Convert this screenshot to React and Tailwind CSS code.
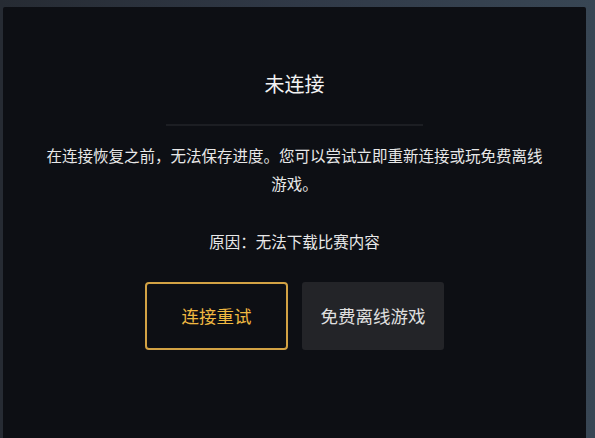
import React from "react";

export default function App() {
  const font = { fontFamily: '"Noto Sans CJK SC", "Noto Sans", sans-serif' };
  return (
    <div
      className="w-[595px] h-[438px] overflow-hidden bg-gradient-to-r from-[#262b33] via-[#303947] to-[#384654] pt-[7px] pl-[3px] pr-[9px] flex"
      style={font}
    >
      <div className="flex-1 h-full bg-[#0d0f14] rounded-tl-[2px] rounded-tr-[2px] flex flex-col items-center pt-[63px]">
        <h1 className="text-[20px] leading-[28px] text-[#f2f2f2] font-normal">未连接</h1>
        <div className="mt-[26px] h-[2px] w-[257px] bg-[#1c1e23]" />
        <p className="mt-[15px] w-[505px] text-center text-[15.5px] leading-[28px] text-[#e8e8e8]">
          在连接恢复之前，无法保存进度。您可以尝试立即重新连接或玩免费离线游戏。
        </p>
        <p className="mt-[30px] text-[15.5px] leading-[28px] text-[#e8e8e8]">原因：无法下载比赛内容</p>
        <div className="mt-[27px] flex gap-[14px]">
          <button className="w-[143px] h-[68px] rounded-[4px] border-2 border-[#d2a244] bg-transparent text-[#f0b942] text-[17.5px] flex items-center justify-center">
            连接重试
          </button>
          <button className="w-[142px] h-[68px] rounded-[3px] bg-[#232428] text-[#e0e0e0] text-[17.5px] flex items-center justify-center">
            免费离线游戏
          </button>
        </div>
      </div>
    </div>
  );
}
